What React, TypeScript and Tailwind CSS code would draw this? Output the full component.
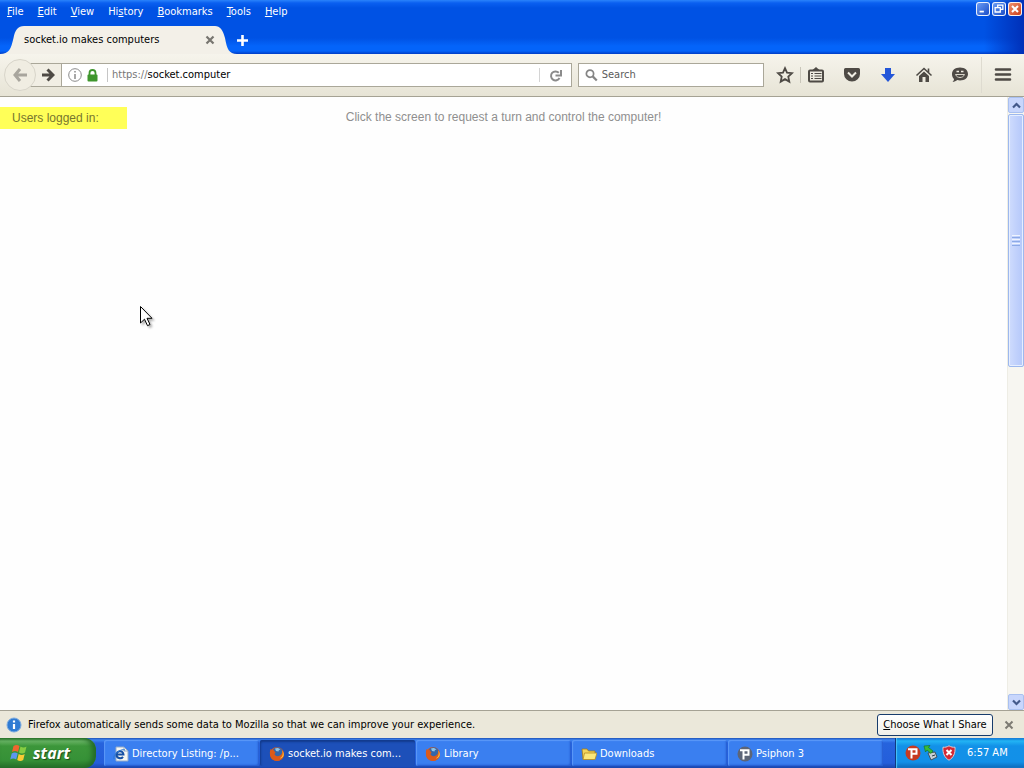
import type { ReactNode } from 'react';

const menus = ['File', 'Edit', 'View', 'History', 'Bookmarks', 'Tools', 'Help'];
const menuKeys = [0, 0, 0, 2, 0, 0, 0];

function TitleBar() {
  return (
    <header className="relative shrink-0 bg-[linear-gradient(to_bottom,#2a83fb_0px,#0a5ff0_3px,#0052e4_8px,#0052e4_38px,#0464fa_46px,#0464fa_51px,#003cc4_54px)]">
      <div className="absolute inset-y-0 right-0 w-10 bg-linear-to-r from-transparent to-[#0030b8]" />
      <div className="relative flex h-6 items-start justify-between">
        <nav className="flex gap-3.5 pl-[7px] pt-1 text-white">
          {menus.map((m, i) => (
            <button key={m} className="leading-4">
              {m.slice(0, menuKeys[i])}
              <span className="underline underline-offset-1">{m[menuKeys[i]]}</span>
              {m.slice(menuKeys[i] + 1)}
            </button>
          ))}
        </nav>
        <div className="flex gap-0.5 pr-0.5 pt-0.5">
          <WindowButton label="Minimize" tone="bg-linear-to-br from-[#6c9cf4] to-[#1a4cc8]">
            <path d="M3 10h5" strokeWidth="2" />
          </WindowButton>
          <WindowButton label="Restore" tone="bg-linear-to-br from-[#6c9cf4] to-[#1a4cc8]">
            <path d="M5.5 5V2.500h6v5H9M2.500 5.500h6v5h-6z" strokeWidth="1.500" />
          </WindowButton>
          <WindowButton label="Close" tone="bg-linear-to-br from-[#f0906c] to-[#cc3a10]">
            <path d="M3.500 3.500l7 7M10.500 3.500l-7 7" strokeWidth="2.400" />
          </WindowButton>
        </div>
      </div>
      <div className="relative flex h-[30px] items-end">
        <div className="flex h-7">
          <svg width="24" height="28" viewBox="0 0 24 28" className="shrink-0" aria-hidden="true">
            <path d="M0 28C9 28 11 23 13.500 12C15 4 18 0 24 0V28Z" fill="#f3f0e8" />
          </svg>
          <div className="flex w-[191px] items-center justify-between bg-[#f3f0e8] text-black">
            <span className="whitespace-nowrap">socket.io makes computers</span>
            <button aria-label="Close tab">
              <svg width="10" height="10" viewBox="0 0 10 10" stroke="#77756f" strokeWidth="2.200" aria-hidden="true">
                <path d="M1.500 1.500l7 7M8.500 1.500l-7 7" />
              </svg>
            </button>
          </div>
          <svg width="22" height="28" viewBox="0 0 22 28" className="shrink-0" aria-hidden="true">
            <path d="M22 28C14 28 12 23 10 12C8 4 5 0 0 0V28Z" fill="#f3f0e8" />
          </svg>
        </div>
        <button aria-label="New tab" className="mb-2">
          <svg width="11" height="11" viewBox="0 0 11 11" stroke="#fff" strokeWidth="2.600" aria-hidden="true">
            <path d="M5.500 0v11M0 5.500h11" />
          </svg>
        </button>
      </div>
    </header>
  );
}

function WindowButton({ label, tone, children }: { label: string; tone: string; children: ReactNode }) {
  return (
    <button aria-label={label} className={`size-3.5 rounded-[3px] border border-white/90 ${tone}`}>
      <svg viewBox="0 0 14 14" fill="none" stroke="#fff" className="size-full" aria-hidden="true">{children}</svg>
    </button>
  );
}

function ToolButton({ label, children }: { label: string; children: ReactNode }) {
  return (
    <button aria-label={label} className="shrink-0">
      <svg width="18" height="18" viewBox="0 0 18 18" fill="none" stroke="#4e4a45" strokeWidth="2" aria-hidden="true">{children}</svg>
    </button>
  );
}

function NavBar() {
  return (
    <div className="flex h-[43px] shrink-0 items-center border-b border-[#a5a294] bg-linear-to-b from-[#f6f4ec] to-[#e7e4d6] pl-1 pr-3">
      <button aria-label="Back" className="z-10 flex size-8 shrink-0 items-center justify-center rounded-full border border-[#d8d5ca] bg-[#f0ede2]">
        <svg width="16" height="16" viewBox="0 0 16 16" fill="none" stroke="#a8a59d" strokeWidth="3" aria-hidden="true">
          <path d="M8 2L3 8l5 6M3 8h12" />
        </svg>
      </button>
      <div className="-ml-2 flex h-6 min-w-0 flex-1 items-stretch border border-[#aaa799] bg-white">
        <button aria-label="Forward" className="flex w-[33px] shrink-0 items-center justify-end border-r border-[#aaa799] bg-[#f1eee4] pr-1.5">
          <svg width="14" height="14" viewBox="0 0 14 14" fill="none" stroke="#4e4a45" strokeWidth="3" aria-hidden="true">
            <path d="M6.500 1.500l5.500 5.500-5.500 5.500M11 7H1" />
          </svg>
        </button>
        <div className="flex items-center gap-1 pl-1.5">
          <svg width="14" height="14" viewBox="0 0 14 14" fill="none" stroke="#8b8b8b" aria-hidden="true">
            <circle cx="7" cy="7" r="6.300" />
            <path d="M7 6v5M7 3v1.500" strokeWidth="1.500" />
          </svg>
          <svg width="13" height="13" viewBox="-1 0 13 13" fill="none" aria-hidden="true">
            <path d="M2.500 6V4a3 3 0 016 0v2" stroke="#3f962d" strokeWidth="1.800" />
            <rect x="0.500" y="5.500" width="10" height="7" rx="1" fill="#3f962d" />
          </svg>
          <span className="ml-1 h-3.5 w-px bg-[#c6c6c6]" />
        </div>
        <div className="relative flex min-w-0 flex-1 items-center">
          <input aria-label="Address" defaultValue="https://socket.computer" className="w-full bg-transparent pl-1 text-transparent outline-none" />
          <span aria-hidden="true" className="pointer-events-none absolute inset-y-0 left-1 flex items-center text-black">
            <span className="text-[#777]">https://</span>socket.computer
          </span>
        </div>
        <button aria-label="Reload" className="my-1 flex w-8 shrink-0 items-center justify-center border-l border-[#d4d4d4]">
          <svg width="13" height="13" viewBox="0 0 13 13" fill="none" stroke="#8b8b8b" strokeWidth="2" aria-hidden="true">
            <path d="M10.500 9A4.500 4.500 0 119.800 3.800" />
            <path d="M12 1V6.500H6.500" />
          </svg>
        </button>
      </div>
      <label className="ml-1.5 flex h-6 w-[186px] shrink items-center gap-1 border border-[#aaa799] bg-white pl-1.5">
        <svg width="14" height="14" viewBox="0 0 14 14" fill="none" stroke="#858585" strokeWidth="1.900" aria-hidden="true">
          <circle cx="5.500" cy="5.500" r="4" />
          <path d="M8.500 8.500l4.500 4.500" strokeWidth="2.400" />
        </svg>
        <input aria-label="Search" placeholder="Search" className="w-full min-w-0 bg-transparent outline-none placeholder:text-[#5b5b5b]" />
      </label>
      <div className="ml-3 flex items-center gap-[18px]">
        <div className="flex items-center gap-1.5">
          <ToolButton label="Bookmark this page">
            <path d="M9 2.200l2 4.500 5 .5-3.700 3.400 1 5L9 13.100l-4.300 2.500 1-5L2 7.200l5-.5z" strokeWidth="1.800" />
          </ToolButton>
          <span className="h-4 w-px bg-[#c9c6ba]" />
          <ToolButton label="Show bookmarks">
            <rect x="2" y="4.500" width="14" height="11" rx="1" strokeWidth="2" />
            <path d="M5 4.500L9 1l4 3.500z" fill="#4e4a45" stroke="none" />
            <path d="M4 7.500h2M7.500 7.500h7M4 10h2M7.500 10h7M4 12.500h2M7.500 12.500h7" strokeWidth="1.200" />
          </ToolButton>
        </div>
        <ToolButton label="Save to Pocket">
          <path d="M2.500 2h13a1.500 1.500 0 011.500 1.500V8a8 7.500 0 01-16 0V3.500A1.500 1.500 0 012.500 2z" fill="#4e4a45" stroke="none" />
          <path d="M5 6.500l4 4 4-4" stroke="#f1eee4" />
        </ToolButton>
        <ToolButton label="Downloads">
          <path d="M6 2h6v6h4l-7 8-7-8h4z" fill="#2456d8" stroke="none" />
        </ToolButton>
        <ToolButton label="Home">
          <path d="M1.500 9.500L9 2.500l7.500 7M13.500 2.500v4" strokeWidth="1.600" />
          <path d="M4 10L9 5.500l5 4.500V16h-3.500v-5h-3v5H4z" fill="#4e4a45" stroke="none" />
        </ToolButton>
        <ToolButton label="Start a conversation">
          <path d="M9 1.500c5 0 8 2.800 8 6.500s-3 6.500-8 6.500c-1 0-2-.1-2.800-.4C5 15.200 3.500 16 1.500 16c1-.8 1.500-1.900 1.500-3C1.600 11.800 1 10.200 1 8c0-3.700 3-6.500 8-6.500z" fill="#4e4a45" stroke="none" />
          <path d="M5.500 5.500h2.500M10 5.500h2.500" stroke="#f1eee4" strokeWidth="1.600" />
          <path d="M4.500 8.500h9c-1.500 4-7.500 4-9 0z" stroke="#d9d5c9" strokeWidth="1" />
        </ToolButton>
      </div>
      <div className="ml-3 flex h-9 items-center border-l border-[#dedbd0] pl-3">
        <ToolButton label="Open menu">
          <path d="M2 3.500h14M2 8.500h14M2 13.500h14" strokeWidth="2.600" strokeLinecap="round" />
        </ToolButton>
      </div>
    </div>
  );
}

function ScrollButton({ label, d }: { label: string; d: string }) {
  return (
    <button aria-label={label} className="flex h-4 shrink-0 items-center justify-center rounded-[2px] border border-[#a9c0f0] bg-[#c8d6fc]">
      <svg width="9" height="7" viewBox="0 0 9 7" fill="none" stroke="#43598a" strokeWidth="2.200" aria-hidden="true">
        <path d={d} />
      </svg>
    </button>
  );
}

function Page() {
  return (
    <div className="flex min-h-0 flex-1 bg-[#fefefe]">
      <main className="relative flex-1 text-xs font-['Liberation_Sans',sans-serif]">
        <p className="pt-3 text-center leading-4 text-[#8f8f8f]">Click the screen to request a turn and control the computer!</p>
        <aside className="absolute left-0 top-2.5 w-[127px] bg-[#ffff58] py-[3px] pl-3 leading-4 text-[#77762f]">Users logged in:</aside>
        <svg className="absolute left-[139px] top-[208px] drop-shadow-[2px_2px_1px_rgba(0,0,0,0.3)]" width="14" height="23" viewBox="0 0 14 23" aria-hidden="true">
          <path d="M1.500 1.500v16.500l4-3.800 3 6.500 2.500-1.200-3-6.200h5z" fill="#fff" stroke="#000" />
        </svg>
      </main>
      <div className="flex w-[17px] shrink-0 flex-col border-l border-[#eeede5] bg-[#f7f6f1]">
        <ScrollButton label="Scroll up" d="M1 5.500l3.500-3.500 3.500 3.500" />
        <div className="min-h-0 flex-1">
          <div className="mt-px flex h-[43.5%] flex-col items-center justify-center gap-px rounded-[2px] border border-[#9db8ee] bg-linear-to-r from-[#cfdcfd] via-[#c1d1fc] to-[#b5c8fa] shadow-[inset_0_0_0_1px_#e6eeff]">
            <span className="h-px w-2 bg-[#eef4fe]" />
            <span className="h-px w-2 bg-[#8caae6]" />
            <span className="h-px w-2 bg-[#eef4fe]" />
            <span className="h-px w-2 bg-[#8caae6]" />
            <span className="h-px w-2 bg-[#eef4fe]" />
            <span className="h-px w-2 bg-[#8caae6]" />
          </div>
        </div>
        <ScrollButton label="Scroll down" d="M1 1.500l3.500 3.500 3.500-3.500" />
      </div>
    </div>
  );
}

function Notice() {
  return (
    <div className="flex h-7 shrink-0 items-center border-t border-[#a5a294] bg-[#ebe8da] pl-1.5 pr-2.5 text-black">
      <svg width="16" height="16" viewBox="0 0 16 16" aria-hidden="true">
        <circle cx="8" cy="8" r="7" fill="#2f7bd3" stroke="#7dabdf" />
        <path d="M8 7v5M8 3.500v2" stroke="#fff" strokeWidth="2.200" />
      </svg>
      <p className="ml-1.5 flex-1">Firefox automatically sends some data to Mozilla so that we can improve your experience.</p>
      <button className="h-[22px] w-[116px] whitespace-nowrap rounded-[3px] border border-[#173c6c] bg-linear-to-b from-white to-[#f1f0e9]">
        <span className="underline underline-offset-1">C</span>hoose What I Share
      </button>
      <button aria-label="Dismiss" className="ml-[11px]">
        <svg width="10" height="10" viewBox="0 0 10 10" stroke="#7d7b73" strokeWidth="2" aria-hidden="true">
          <path d="M1.500 1.500l7 7M8.500 1.500l-7 7" />
        </svg>
      </button>
    </div>
  );
}

function FirefoxIcon() {
  return (
    <svg width="16" height="16" viewBox="0 0 16 16" aria-hidden="true">
      <circle cx="8" cy="8" r="7" fill="#d9581c" />
      <circle cx="8.500" cy="6.500" r="5.300" fill="#3566a8" />
      <path d="M6 2.500c2-1 4-.5 5.500 1-1.500 0-2 1-2 2L7 5z" fill="#8cc4e8" />
      <path d="M1.500 3c1 .8 1.500 1 3 1L6.500 6.500 5.500 8c.5 2 3 3 5.500 1.500 2-1 2.500-3.500 2-5.500 2 2 2.500 5 1 7.500-2 3.500-7 4.500-10.500 2C.5 11 .5 6 1.500 3z" fill="#dc5a1a" />
      <path d="M13.200 4.500c1.300 3.500.3 6.500-2.500 8 4.300-.5 5.300-4.500 2.500-8z" fill="#f8c13c" />
    </svg>
  );
}

function PsiphonIcon({ fill }: { fill: string }) {
  return (
    <svg width="16" height="16" viewBox="0 0 16 16" fill="none" aria-hidden="true">
      <circle cx="8" cy="8" r="7.500" fill={fill} />
      <path d="M3 4.200h8.500v4.600H6.500M6.500 4.200V13.500" stroke="#fff" strokeWidth="2" />
    </svg>
  );
}

function ExplorerIcon() {
  return (
    <svg width="16" height="16" viewBox="0 0 16 16" fill="none" aria-hidden="true">
      <path d="M3 1h8l4 4v10H3z" fill="#f5f6f2" stroke="#93aac8" />
      <path d="M11 1v4h4" stroke="#93aac8" />
      <path d="M3.500 8.500h7A3.500 3.500 0 103.500 9c0 3 4.500 4.500 6.500 1.800" stroke="#1650a4" strokeWidth="2" />
      <path d="M1 13C-1 9 8 2 12 4" stroke="#2c78d4" />
    </svg>
  );
}

function FolderIcon() {
  return (
    <svg width="16" height="16" viewBox="0 0 16 16" aria-hidden="true">
      <path d="M1 3h5l1.500 2H14v8H2z" fill="#f2d45c" stroke="#a47b18" strokeWidth=".8" />
      <path d="M3.500 7H16l-2 6.500H2z" fill="#fbe77a" stroke="#b88c20" strokeWidth=".8" />
    </svg>
  );
}

const tasks = [
  { title: 'Directory Listing: /p...', icon: <ExplorerIcon />, active: false },
  { title: 'socket.io makes com...', icon: <FirefoxIcon />, active: true },
  { title: 'Library', icon: <FirefoxIcon />, active: false },
  { title: 'Downloads', icon: <FolderIcon />, active: false },
  { title: 'Psiphon 3', icon: <PsiphonIcon fill="#5d6577" />, active: false },
];

function Taskbar() {
  return (
    <footer className="flex h-[30px] shrink-0 items-stretch bg-[linear-gradient(to_bottom,#1f52b5_0px,#3f86f2_2px,#2663dd_5px,#245edb_25px,#1a46ac_30px)] text-white">
      <button className="flex w-24 shrink-0 items-center gap-1 rounded-r-xl bg-[linear-gradient(to_bottom,#2c7b2b_0px,#69b565_3px,#3c963a_8px,#369137_22px,#26702a_30px)] pl-2.5 shadow-[inset_-4px_0_5px_#246b28]">
        <svg width="19" height="18" viewBox="0 0 19 18" aria-hidden="true">
          <path d="M3.500 2c2-1.500 4-1.500 6 0L8 8c-2-1.500-4-1.500-6 0z" fill="#f0652f" />
          <path d="M10.500 2.500c2 1.300 4 1.300 6 0L15 8.500c-2 1.300-4 1.300-6 0z" fill="#86cc42" />
          <path d="M1.700 9.500c2-1.500 4-1.500 6 0L6.200 15.500c-2-1.500-4-1.500-6 0z" fill="#5c97f0" />
          <path d="M8.700 10c2 1.300 4 1.300 6 0l-1.500 6c-2 1.300-4 1.300-6 0z" fill="#fbcb34" />
        </svg>
        <span className="text-base font-bold italic font-['Open_Sans',sans-serif] [text-shadow:1px_1px_1px_#1c4c1c]">start</span>
      </button>
      <div className="ml-2 mr-3 flex min-w-0 flex-1 gap-px py-0.5">
        {tasks.map((t) => (
          <button
            key={t.title}
            className={`flex min-w-0 max-w-[155px] flex-1 items-center gap-[3px] rounded-[2px] pl-[9px] ${
              t.active
                ? 'bg-[#1d50b9] pt-0.5 shadow-[inset_1px_2px_2px_#123a8c]'
                : 'bg-[#3a7ff0] pt-px shadow-[inset_1px_1px_1px_#5c9af8,inset_-1px_-1px_2px_#2258cc]'
            }`}
          >
            <span className="shrink-0">{t.icon}</span>
            <span className="whitespace-nowrap">{t.title}</span>
          </button>
        ))}
      </div>
      <div className="flex w-[129px] shrink-0 items-center gap-0.5 border-l border-[#103a80] bg-[linear-gradient(to_bottom,#0f6fd0_0px,#22b4f4_3px,#1291e8_8px,#1290e8_24px,#0d68b8_30px)] pl-[9px] shadow-[inset_1px_0_1px_#4cc4f8]">
        <PsiphonIcon fill="#c63a20" />
        <svg width="16" height="16" viewBox="0 0 16 16" aria-hidden="true">
          <path d="M5 8l7-1 2 5-6 3z" fill="#c8d0d4" stroke="#42505c" />
          <path d="M9 11l3-1" stroke="#303a44" />
          <path d="M1 1l6-.5-1.500 2L10 6 8 8.500 4 5 2.500 7z" fill="#38bc38" stroke="#14701c" strokeWidth=".6" />
        </svg>
        <svg width="16" height="16" viewBox="0 0 16 16" aria-hidden="true">
          <path d="M8 .8c2 1.200 4 1.700 6 1.400.5 6-1.500 10.500-6 13-4.500-2.500-6.500-7-6-13 2 .3 4-.2 6-1.400z" fill="#d42834" stroke="#d8cbd2" />
          <path d="M5.500 5l5 5M10.500 5l-5 5" stroke="#fff" strokeWidth="2" />
        </svg>
        <time className="ml-2 whitespace-nowrap">6:57 AM</time>
      </div>
    </footer>
  );
}

export default function App() {
  return (
    <div className="flex h-screen flex-col overflow-hidden text-[11px] leading-4 font-['DejaVu_Sans_Condensed','DejaVu_Sans',sans-serif]">
      <TitleBar />
      <NavBar />
      <Page />
      <Notice />
      <Taskbar />
    </div>
  );
}
